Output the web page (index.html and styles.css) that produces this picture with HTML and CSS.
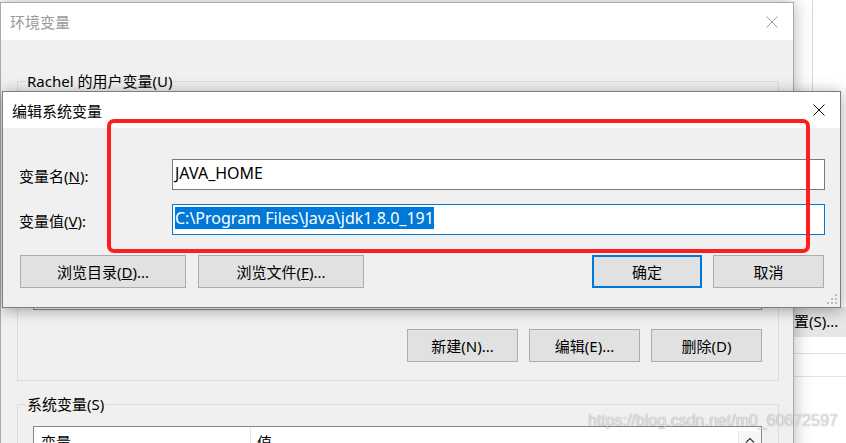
FILE: index.html
```html
<!DOCTYPE html>
<html lang="zh-CN">

<head>
    <meta charset="UTF-8">
    <meta name="viewport" content="width=device-width, initial-scale=1.0">
    <link rel="stylesheet" href="styles.css">
    <title>环境变量</title>
</head>

<body>
    <div class="desk">
        <!-- system properties window, mostly hidden -->
        <div class="side-win">
            <div class="side-top"></div>
            <div class="side-btn">设置(S)...</div>
            <div class="side-row"></div>
            <div class="side-row tall"></div>
        </div>

        <!-- environment variables window -->
        <div class="win env">
            <div class="titlebar">
                <span class="title muted">环境变量</span>
                <svg class="close" width="12" height="12" viewBox="0 0 12 12"><path d="M0.5 0.5L11.5 11.5M11.5 0.5L0.5 11.5" stroke="#9a9a9a" stroke-width="1" fill="none"/></svg>
            </div>
            <div class="env-body">
                <fieldset class="group">
                    <legend>Rachel 的用户变量(U)</legend>
                    <div class="listbox user-list"></div>
                    <div class="btn-row">
                        <div class="btn">新建(N)...</div>
                        <div class="btn">编辑(E)...</div>
                        <div class="btn">删除(D)</div>
                    </div>
                </fieldset>
                <fieldset class="group sys">
                    <legend>系统变量(S)</legend>
                    <div class="listbox sys-list">
                        <div class="list-head">
                            <div class="col-name">变量</div>
                            <div class="col-value">值</div>
                            <div class="scroll-up">
                                <svg width="10" height="6" viewBox="0 0 10 6"><path d="M1 5.5L5 1.5L9 5.5" stroke="#333" stroke-width="1.2" fill="none"/></svg>
                            </div>
                        </div>
                    </div>
                </fieldset>
            </div>
        </div>

        <!-- edit system variable dialog -->
        <div class="win edit">
            <div class="titlebar">
                <span class="title">编辑系统变量</span>
                <svg class="close" width="12" height="12" viewBox="0 0 12 12"><path d="M0.5 0.5L11.5 11.5M11.5 0.5L0.5 11.5" stroke="#111" stroke-width="1" fill="none"/></svg>
            </div>
            <div class="edit-body">
                <div class="fields">
                    <div class="lbl">变量名(<u>N</u>):</div>
                    <div class="input">JAVA_HOME</div>
                    <div class="lbl">变量值(<u>V</u>):</div>
                    <div class="input focus"><span class="sel">C:\Program Files\Java\jdk1.8.0_191</span></div>
                </div>
                <div class="dlg-btns">
                    <div class="btn wide">浏览目录(<u>D</u>)...</div>
                    <div class="btn wide">浏览文件(<u>F</u>)...</div>
                    <div class="btn ok">确定</div>
                    <div class="btn">取消</div>
                </div>
            </div>
            <svg class="grip" width="10" height="10" viewBox="0 0 10 10">
                <rect x="8" y="0" width="2" height="2" fill="#bdbdbd"/>
                <rect x="4" y="4" width="2" height="2" fill="#bdbdbd"/>
                <rect x="8" y="4" width="2" height="2" fill="#bdbdbd"/>
                <rect x="0" y="8" width="2" height="2" fill="#bdbdbd"/>
                <rect x="4" y="8" width="2" height="2" fill="#bdbdbd"/>
                <rect x="8" y="8" width="2" height="2" fill="#bdbdbd"/>
            </svg>
        </div>

        <div class="mark"></div>
        <div class="watermark">https://blog.csdn.net/m0_60672597</div>
    </div>
</body>

</html>
```

FILE: styles.css
```css
* {
    box-sizing: border-box;
}

body {
    margin: 0;
    font-family: "Noto Sans", "Noto Sans CJK SC", sans-serif;
    font-size: 15px;
    color: #000;
}

.desk {
    position: relative;
    width: 846px;
    height: 443px;
    overflow: hidden;
    background: #fff;
}

/* right window behind */
.side-win {
    position: absolute;
    left: 760px;
    top: 0;
    width: 86px;
    height: 443px;
    background: #fff;
}

.side-top {
    margin-left: 52px;
    height: 91px;
    border-left: 1px solid #d4d4d4;
}

.side-btn {
    margin-top: 216px;
    height: 30px;
    line-height: 28px;
    padding-left: 19px;
    background: #e6e6e6;
    white-space: nowrap;
}

.side-row {
    height: 17px;
    border-bottom: 1px solid #e2e2e2;
}

.side-row.tall {
    height: 23px;
}

/* windows */
.win {
    position: absolute;
    background: #f0f0f0;
}

.titlebar {
    display: flex;
    align-items: center;
    justify-content: space-between;
    background: #fff;
}

.title.muted {
    color: #999;
}

.env {
    left: 0;
    top: 2px;
    width: 794px;
    height: 470px;
    border: 1px solid #a9a9a9;
    box-shadow: 0 0 16px rgba(0, 0, 0, 0.3);
}

.env .titlebar {
    height: 37px;
    padding: 0 15px 0 9px;
}

.env-body {
    padding: 31px 14px 0 16px;
}

.group {
    margin: 0;
    border: 1px solid #dcdcdc;
    padding: 0 16px 18px 15px;
}

.group legend {
    padding: 0 1px;
    margin-left: -7px;
    line-height: 20px;
}

.group.sys {
    margin-top: 13px;
}

.listbox {
    border: 1px solid #828790;
    background: #fff;
}

.user-list {
    margin-top: 9px;
    height: 210px;
}

.sys-list {
    margin-top: 12px;
    height: 60px;
}

.list-head {
    display: flex;
    height: 26px;
}

.col-name {
    width: 217px;
    border-right: 1px solid #e5e5e5;
    padding: 4px 0 0 7px;
}

.col-value {
    flex: 1;
    padding: 4px 0 0 6px;
}

.scroll-up {
    width: 23px;
    margin-top: 4px;
    border-left: 1px solid #e8e8e8;
    background: #f7f7f7;
    display: flex;
    justify-content: center;
    padding-top: 6px;
}

.btn-row {
    display: flex;
    justify-content: flex-end;
    gap: 11px;
    margin-top: 19px;
}

.btn {
    width: 111px;
    height: 33px;
    border: 1px solid #adadad;
    background: #e1e1e1;
    display: flex;
    align-items: center;
    justify-content: center;
    white-space: nowrap;
}

/* edit dialog */
.edit {
    left: 2px;
    top: 91px;
    width: 839px;
    height: 217px;
    border: 1px solid #7e7e7e;
    box-shadow: 0 2px 14px rgba(0, 0, 0, 0.35);
}

.edit .titlebar {
    height: 36px;
    padding: 0 15px 0 9px;
}

.edit-body {
    padding: 31px 15px 0 16px;
}

.fields {
    display: grid;
    grid-template-columns: 153px 1fr;
    row-gap: 14px;
    align-items: center;
}

.lbl {
    padding-top: 1px;
}

.input {
    height: 31px;
    border: 1px solid #7a7a7a;
    background: #fff;
    padding: 2px 2px 0;
    font-size: 16px;
    line-height: 22px;
    white-space: nowrap;
}

.input.focus {
    border-color: #0078d7;
}

.sel {
    display: inline-block;
    background: #0078d7;
    color: #fff;
}

.dlg-btns {
    display: flex;
    gap: 12px;
    margin-top: 20px;
    padding: 0 1px;
}

.dlg-btns .wide {
    width: 166px;
}

.dlg-btns .ok {
    margin-left: auto;
    width: 110px;
    border: 2px solid #0078d7;
    margin-right: -1px;
}

.grip {
    position: absolute;
    right: 3px;
    bottom: 3px;
}

/* annotation + watermark */
.mark {
    position: absolute;
    left: 107px;
    top: 119px;
    width: 703px;
    height: 134px;
    border: 4px solid #ff1e1e;
    border-radius: 7px;
}

.watermark {
    position: absolute;
    left: 588px;
    top: 412px;
    font-family: "Liberation Sans", Arial, sans-serif;
    font-size: 16px;
    color: rgba(255, 255, 255, 0.7);
    text-shadow: 0 0 1px rgba(0, 0, 0, 0.45);
    white-space: nowrap;
}
```
